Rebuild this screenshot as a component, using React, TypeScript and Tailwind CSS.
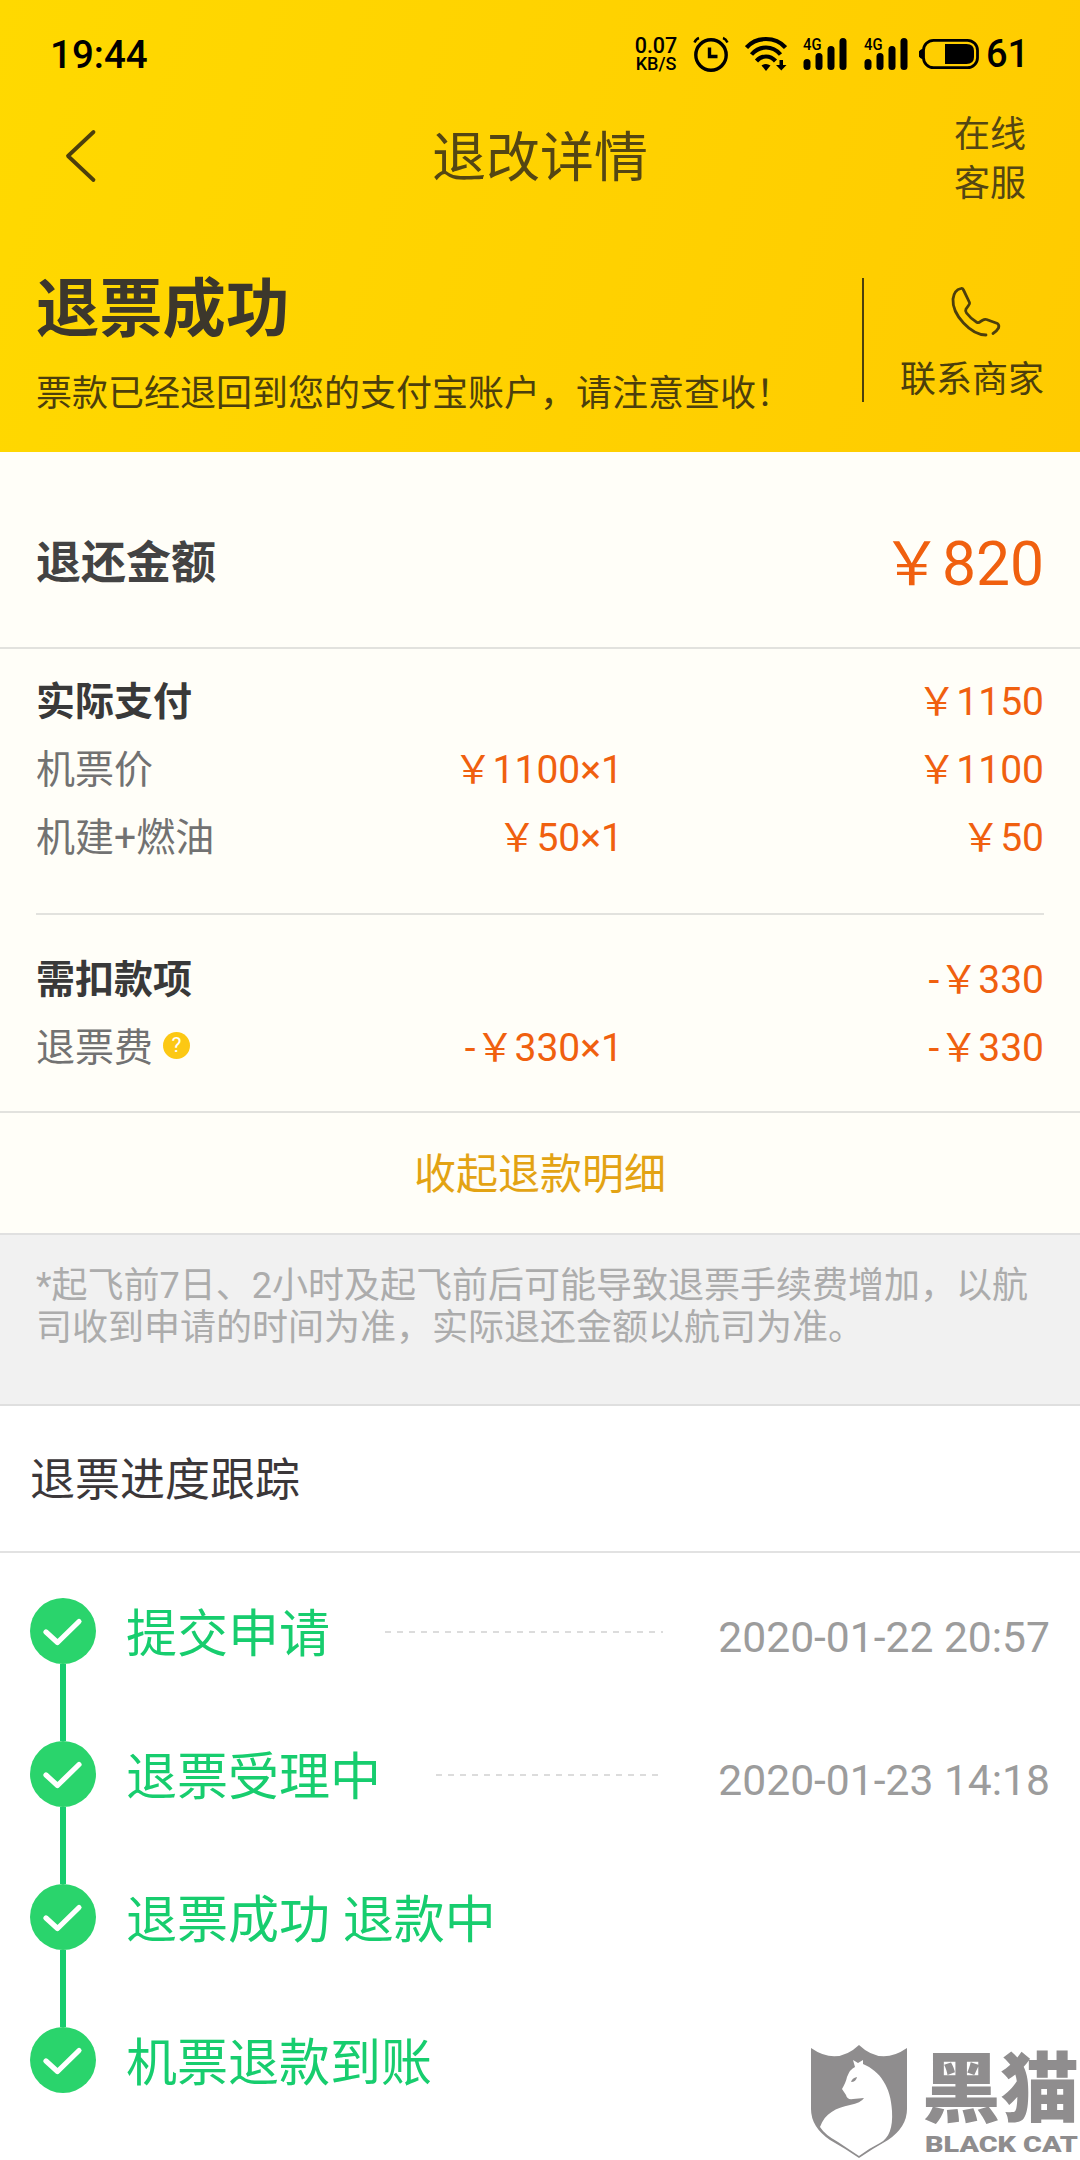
import clsx from "clsx";

const steps = [
  { label: "提交申请", time: "2020-01-22 20:57" },
  { label: "退票受理中", time: "2020-01-23 14:18" },
  { label: "退票成功 退款中" },
  { label: "机票退款到账" },
];

function Signal() {
  return (
    <svg width="44" height="34" viewBox="0 0 44 34" className="overflow-visible">
      <text x="0" y="13" fontSize="16.5" fontWeight="500" textLength="18.5" lengthAdjust="spacingAndGlyphs">4G</text>
      <rect x="0.5" y="22" width="7" height="11" rx="3.5" />
      <rect x="12.5" y="16" width="7" height="17" rx="3.5" />
      <rect x="24.5" y="9" width="7" height="24" rx="3.5" />
      <rect x="36.5" y="1" width="7" height="32" rx="3.5" />
    </svg>
  );
}

function StatusBar() {
  return (
    <div className="flex h-[108px] items-center pl-[50px] text-black">
      <span className="pt-[2px] text-[38.5px] leading-[40px] font-medium">19:44</span>
      <div className="ml-auto flex w-[446px] items-center">
        <div className="flex w-[44px] flex-col items-center pt-px font-medium">
          <span className="text-[21.5px] leading-[18px]">0.07</span>
          <span className="text-[18px] leading-[17px]">KB/S</span>
        </div>
        <svg width="36" height="36" viewBox="0 0 36 36" fill="none" stroke="currentColor" className="ml-[15px]">
          <circle cx="18" cy="19" r="15.2" strokeWidth="3.4" />
          <path d="M16.5 11.5v9h8" strokeWidth="3.4" />
          <path d="M1.5 6.5Q3 3 6 2M34.5 6.5Q33 3 30 2" strokeWidth="2.5" />
        </svg>
        <svg width="42" height="36" viewBox="0 0 42 36" fill="none" stroke="currentColor" className="ml-[16px]">
          <path d="M1.5 11.5Q9 3 21 3T40.5 11.5" strokeWidth="4.2" />
          <path d="M6.5 18.5Q12.5 11.5 21 11.5T35.5 18.5" strokeWidth="4.2" />
          <path d="M11.5 25Q15.5 20.5 21 20.5T30.5 25" strokeWidth="4.2" />
          <path d="M16.5 29.5Q21 26.5 25.5 29.5L21 35z" fill="currentColor" stroke="none" />
          <path d="M34.5 24h3.5v5h3.5L36.3 34.5 31 29h3.5z" fill="currentColor" stroke="none" />
        </svg>
        <div className="ml-[16px] flex gap-[17px]">
          <Signal />
          <Signal />
        </div>
        <svg width="61" height="32" viewBox="0 0 61 32" fill="none" className="ml-[11px]">
          <rect x="4.5" y="2.3" width="54" height="27.4" rx="10" stroke="currentColor" strokeWidth="2.8" />
          <path d="M4 11.5A4.3 4.3 0 0 0 4 20.5z" fill="currentColor" stroke="currentColor" />
          <path d="M26 6H47.5Q55 6 55 13V19Q55 26 47.5 26H26z" fill="currentColor" />
        </svg>
        <span className="ml-[6px] text-[38px] leading-[40px] font-medium">61</span>
      </div>
    </div>
  );
}

function Header() {
  return (
    <header className="h-[452px] bg-linear-[108deg,#ffd900,#ffcb00] text-[#4c3f0c]">
      <StatusBar />
      <div className="flex h-[98px] items-center justify-between pr-[54px] pl-[64px]">
        <svg width="72" height="56" viewBox="0 0 72 56" fill="none" stroke="currentColor" strokeWidth="3.8" strokeLinecap="round" strokeLinejoin="round">
          <path d="M29.5 3L4 27 29.5 51" />
        </svg>
        <h1 className="mr-[10px] pt-[4px] text-[54px] leading-[60px] text-[#544613]">退改详情</h1>
        <div className="w-[72px] pt-[5px] text-[36px] leading-[49px] text-[#544613]">在线客服</div>
      </div>
      <div className="flex pt-[72px]">
        <div className="w-[862px] pl-[36px]">
          <h2 className="text-[63.3px] leading-[62px] font-bold text-[#3c372c]">退票成功</h2>
          <p className="mt-[32px] text-[36px] leading-[44px]">票款已经退回到您的支付宝账户，请注意查收！</p>
        </div>
        <div className="h-[124px] w-[2px] bg-current" />
        <div className="flex w-[216px] flex-col items-center pt-[8px]">
          <svg width="52" height="52" viewBox="0 0 52 52" fill="none" stroke="currentColor" strokeWidth="2.8" strokeLinecap="round" strokeLinejoin="round" className="ml-[8px]">
            <path d="M36 49C21 49 2 29 3 13Q4 4 11 2.500Q12.500 2 13.500 4L19.500 16.500Q20 18 18.500 19.500L16 23Q15 25 16.500 27Q21 33 27 36.500Q29 37 30.500 35.500L33 34Q34.500 33 36.500 33.500L47.500 37.500Q49.500 39 48.500 42Q46.500 45.500 43 47.500" />
          </svg>
          <span className="mt-[20px] text-[36px] leading-[44px]">联系商家</span>
        </div>
      </div>
    </header>
  );
}

type RowProps = { label: string; unit?: string; total: string; strong?: boolean; help?: boolean };

function Row({ label, unit, total, strong, help }: RowProps) {
  return (
    <div className="flex h-[68px] items-center text-[39px] leading-[46px] text-[#f0600f]">
      <div className={clsx("flex w-[260px] items-center", strong ? "font-bold text-[#393939]" : "text-[#727272]")}>
        {label}
        {help && (
          <span className="mb-[6px] ml-[10px] flex size-[27px] items-center justify-center rounded-full bg-[#fcc814] text-[21px] leading-[27px] text-white">
            ?
          </span>
        )}
      </div>
      <div className="w-[327px] text-right">{unit}</div>
      <div className="flex-1 text-right">{total}</div>
    </div>
  );
}

function Step({ label, time, last }: { label: string; time?: string; last: boolean }) {
  return (
    <li className="flex h-[143px] items-start">
      <div className="flex h-full w-[66px] flex-col items-center">
        <svg width="66" height="66" viewBox="0 0 66 66" fill="none" className="shrink-0">
          <circle cx="33" cy="33" r="33" fill="#2ad46c" />
          <path d="M16 34L27.500 44.500 49 23.500" stroke="white" strokeWidth="5.2" strokeLinecap="round" strokeLinejoin="round" />
        </svg>
        {!last && <div className="w-[6px] flex-1 bg-[#17cd6e]" />}
      </div>
      <span className="ml-[30px] text-[51px] leading-[73px] whitespace-pre text-[#17cd6e]">{label}</span>
      {time && (
        <>
          <svg height="66" className="mr-[55px] ml-[55px] w-0 flex-1">
            <line x1="0" y1="34" x2="100%" y2="34" stroke="#dcdcdc" strokeWidth="2" strokeDasharray="6 6" />
          </svg>
          <span className="text-[42.6px] leading-[79px] text-[#9c9c9c]">{time}</span>
        </>
      )}
    </li>
  );
}

function Watermark() {
  return (
    <div className="absolute top-[2044px] left-[810px] flex text-[#8f8d8e]">
      <svg width="98" height="116" viewBox="0 0 98 116">
        <path d="M1 4Q27 22 49 1Q71 22 97 4V65Q97 83 78 96Q62 105 49 114Q36 105 20 96Q1 83 1 65z" fill="currentColor" />
        <path
          d="M43 16L48 19 53 16V20C70 27 81 43 82 67C83 84 79 94 70 99Q58 105 49 112L28 98Q15 91 10 83C15 69 26 64 40 61Q51 59 54 54L43 55Q37 56 36 51L32 45Q36 38 37 33Q40 25 45 23z"
          fill="white"
        />
        <path d="M41 38Q42 34 47 33Q46 38 41 38z" fill="currentColor" />
      </svg>
      <svg width="160" height="115" viewBox="0 0 160 115" fill="currentColor" className="ml-[12px]">
        <text x="2" y="72" fontSize="76" fontWeight="900" textLength="157" lengthAdjust="spacingAndGlyphs">黑猫</text>
        <text x="5" y="108" fontSize="22" fontWeight="900" textLength="153" lengthAdjust="spacingAndGlyphs">BLACK CAT</text>
      </svg>
    </div>
  );
}

export default function App() {
  return (
    <div className="relative h-[2160px] w-[1080px] overflow-hidden bg-white font-['Roboto','Noto_Sans_CJK_SC',sans-serif]">
      <Header />

      <main>
        <section className="border-b-2 border-[#e0e0e0] bg-[#fffef8]">
          <div className="flex h-[197px] items-center justify-between border-b-2 border-[#e2e2de] px-[36px] pt-[28px]">
            <span className="text-[45px] leading-[54px] font-bold text-[#434343]">退还金额</span>
            <span className="pt-[2px] text-[60.5px] leading-[60px] text-[#f0600f]">￥820</span>
          </div>
          <div className="mx-[36px] h-[266px] border-b-2 border-[#e2e2de] pt-[19px]">
            <Row label="实际支付" total="￥1150" strong />
            <Row label="机票价" unit="￥1100×1" total="￥1100" />
            <Row label="机建+燃油" unit="￥50×1" total="￥50" />
          </div>
          <div className="h-[198px] border-b-2 border-[#e2e2de] px-[36px] pt-[31px]">
            <Row label="需扣款项" total="-￥330" strong />
            <Row label="退票费" unit="-￥330×1" total="-￥330" help />
          </div>
          <div className="flex h-[120px] items-center justify-center pt-[3px] text-[42px] leading-[50px] text-[#e3a313]">
            收起退款明细
          </div>
        </section>

        <p className="h-[171px] border-b-2 border-[#dfdfdf] bg-[#f1f1f1] px-[36px] pt-[30px] text-[36px] leading-[42px] text-[#acacac]">
          *起飞前7日、2小时及起飞前后可能导致退票手续费增加，以航司收到申请的时间为准，实际退还金额以航司为准。
        </p>

        <section>
          <h3 className="flex h-[147px] items-center border-b-2 border-[#e2e2e2] pt-[4px] pl-[30px] text-[45px] text-[#3b3739]">
            退票进度跟踪
          </h3>
          <ul className="pt-[45px] pr-[30px] pl-[30px]">
            {steps.map((step, i) => (
              <Step key={step.label} {...step} last={i === steps.length - 1} />
            ))}
          </ul>
        </section>
      </main>

      <Watermark />
    </div>
  );
}
